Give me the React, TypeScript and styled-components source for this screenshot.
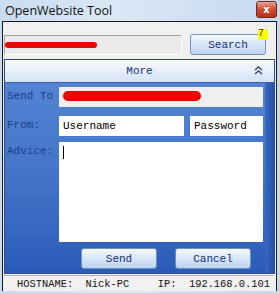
import React from 'react';
import styled, { createGlobalStyle } from 'styled-components';

const GlobalStyle = createGlobalStyle`
    html, body {
        margin: 0;
        padding: 0;
        width: 279px;
        height: 293px;
        overflow: hidden;
    }
`;

const Window = styled.div`
    width: 279px;
    height: 293px;
    box-sizing: border-box;
    display: flex;
    flex-direction: column;
    background: linear-gradient(to right, #c9dcf1, #dbe8f6 40%, #c6d9ef);
    padding: 0 2px 2px 2px;
`;

const TitleBar = styled.div`
    height: 21px;
    display: flex;
    align-items: flex-start;
    justify-content: space-between;
    padding: 0 0 0 3px;
`;

const Title = styled.span`
    margin-top: 3px;
    font-family: 'Open Sans', 'Noto Sans', sans-serif;
    font-size: 12.5px;
    line-height: 15px;
    color: #111;
`;

const CloseButton = styled.div`
    width: 21px;
    height: 17px;
    margin-top: 1px;
    border-radius: 3px;
    border: 1px solid #6e2a1e;
    box-sizing: border-box;
    background: linear-gradient(#eaa595, #cf4a30 50%, #b8321c);
    color: #fff;
    font-family: 'DejaVu Sans', sans-serif;
    font-weight: bold;
    font-size: 10px;
    display: flex;
    align-items: center;
    justify-content: center;
`;

const Client = styled.div`
    flex: 1;
    display: flex;
    flex-direction: column;
    background: #f0f0f0;
    border: 1px solid #1a1a1a;
    border-bottom: none;
    padding: 0 2px 0 1px;
`;

const SearchRow = styled.div`
    height: 37px;
    display: flex;
    align-items: flex-end;
    gap: 8px;
    padding: 0 0 4px 0;
    box-sizing: border-box;
`;

const SearchBox = styled.div`
    position: relative;
    width: 178px;
    height: 20px;
    box-sizing: border-box;
    border-top: 1px solid #a0a0a0;
    border-left: 1px solid #a0a0a0;
    border-bottom: 1px solid #fff;
    border-right: 1px solid #fff;
    background: #ecebea;
`;

const Scribble = styled.div<{ $w: number; $h: number; $top: number; $left: number }>`
    position: absolute;
    left: ${p => p.$left}px;
    top: ${p => p.$top}px;
    width: ${p => p.$w}px;
    height: ${p => p.$h}px;
    border-radius: ${p => p.$h / 2}px;
    background: #f40000;
`;

const BlueButton = styled.button<{ $w: number }>`
    position: relative;
    width: ${p => p.$w}px;
    height: 21px;
    padding: 0;
    border: 1px solid #7090c0;
    border-radius: 3px;
    background: linear-gradient(#f3f8fe, #d8e6f8 50%, #bcd3f2);
    font-family: 'Liberation Mono', monospace;
    font-size: 11px;
    color: #10307a;
    cursor: pointer;
`;

const Badge = styled.span`
    position: absolute;
    right: -3px;
    top: -6px;
    width: 10px;
    height: 11px;
    background: #ffff00;
    color: #333;
    font-family: 'Liberation Mono', monospace;
    font-size: 10px;
    line-height: 10px;
    text-align: left;
`;

const Panel = styled.div`
    flex: 1;
    display: flex;
    flex-direction: column;
    border: 1px solid #2a4a8a;
    width: 271px;
    box-sizing: border-box;
`;

const PanelHeader = styled.div`
    position: relative;
    height: 22px;
    display: flex;
    align-items: center;
    justify-content: center;
    background: linear-gradient(#fafcff, #e2ecf8 60%, #d3e2f5);
    border-bottom: 1px solid #3a62b0;
    font-family: 'Liberation Mono', monospace;
    font-size: 11px;
    color: #10307a;
`;

const Chevron = styled.svg`
    position: absolute;
    right: 11px;
    top: 6px;
`;

const PanelBody = styled.div`
    flex: 1;
    display: flex;
    flex-direction: column;
    padding: 4px 11px 0 1px;
    background: linear-gradient(#5383d2, #4474c8 50%, #2a5bb8);
    position: relative;
    overflow: hidden;
`;

const EdgeShade = styled.div`
    position: absolute;
    top: 0;
    right: 0;
    bottom: 0;
    width: 9px;
    background: linear-gradient(to right, #3a68c0, #2452ac);
    pointer-events: none;
`;

const FormRow = styled.div<{ $mt: number; $h: number }>`
    display: flex;
    margin-top: ${p => p.$mt}px;
    height: ${p => p.$h}px;
`;

const Label = styled.div`
    width: 52px;
    flex: none;
    padding: 2px 0 0 1px;
    font-family: 'Liberation Mono', monospace;
    font-size: 11px;
    line-height: 14px;
    color: #1c3c8c;
`;

const Field = styled.div<{ $gray?: boolean; $w?: number }>`
    position: relative;
    flex: ${p => (p.$w ? 'none' : '1')};
    width: ${p => (p.$w ? `${p.$w}px` : 'auto')};
    box-sizing: border-box;
    background: ${p => (p.$gray ? '#efefef' : '#fff')};
    font-family: 'Liberation Mono', monospace;
    font-size: 11px;
    color: #000;
    padding: 4px 0 0 4px;
    line-height: 13px;
`;

const FieldGap = styled.div`
    width: 6px;
    flex: none;
`;

const Caret = styled.span`
    display: inline-block;
    width: 1px;
    height: 13px;
    background: #000;
`;

const ButtonRow = styled.div`
    margin-top: 6px;
    display: flex;
    gap: 18px;
    padding-left: 75px;
`;

const StatusBar = styled.div`
    height: 15px;
    margin-top: 1px;
    display: flex;
    justify-content: space-between;
    align-items: center;
    padding: 0 4px 0 13px;
    background: #f0f0f0;
    border-top: 1px solid #b0b0b0;
    font-family: 'Liberation Mono', monospace;
    font-size: 10.4px;
    color: #111;
    white-space: pre;
`;

const App: React.FC = () => {
    return (
        <>
            <GlobalStyle />
            <Window>
                <TitleBar>
                    <Title>OpenWebsite Tool</Title>
                    <CloseButton>x</CloseButton>
                </TitleBar>
                <Client>
                    <SearchRow>
                        <SearchBox>
                            <Scribble $w={92} $h={6} $top={6} $left={0} />
                        </SearchBox>
                        <BlueButton $w={76}>
                            Search
                            <Badge>7</Badge>
                        </BlueButton>
                    </SearchRow>
                    <Panel>
                        <PanelHeader>
                            More
                            <Chevron width="9" height="9" viewBox="0 0 9 9">
                                <path d="M1 4 L4.5 1 L8 4 M1 8 L4.5 5 L8 8" stroke="#3c4c6c" strokeWidth="1.6" fill="none" />
                            </Chevron>
                        </PanelHeader>
                        <PanelBody>
                            <EdgeShade />
                            <FormRow $mt={0} $h={20}>
                                <Label>Send To</Label>
                                <Field $gray>
                                    <Scribble $w={138} $h={10} $top={4} $left={4} />
                                </Field>
                            </FormRow>
                            <FormRow $mt={9} $h={20}>
                                <Label>From:</Label>
                                <Field $w={125}>Username</Field>
                                <FieldGap />
                                <Field>Password</Field>
                            </FormRow>
                            <FormRow $mt={6} $h={100}>
                                <Label>Advice:</Label>
                                <Field>
                                    <Caret />
                                </Field>
                            </FormRow>
                            <ButtonRow>
                                <BlueButton $w={76}>Send</BlueButton>
                                <BlueButton $w={76}>Cancel</BlueButton>
                            </ButtonRow>
                        </PanelBody>
                    </Panel>
                    <StatusBar>
                        <span>HOSTNAME:  Nick-PC</span>
                        <span>IP:  192.168.0.101</span>
                    </StatusBar>
                </Client>
            </Window>
        </>
    );
};

export default App;
